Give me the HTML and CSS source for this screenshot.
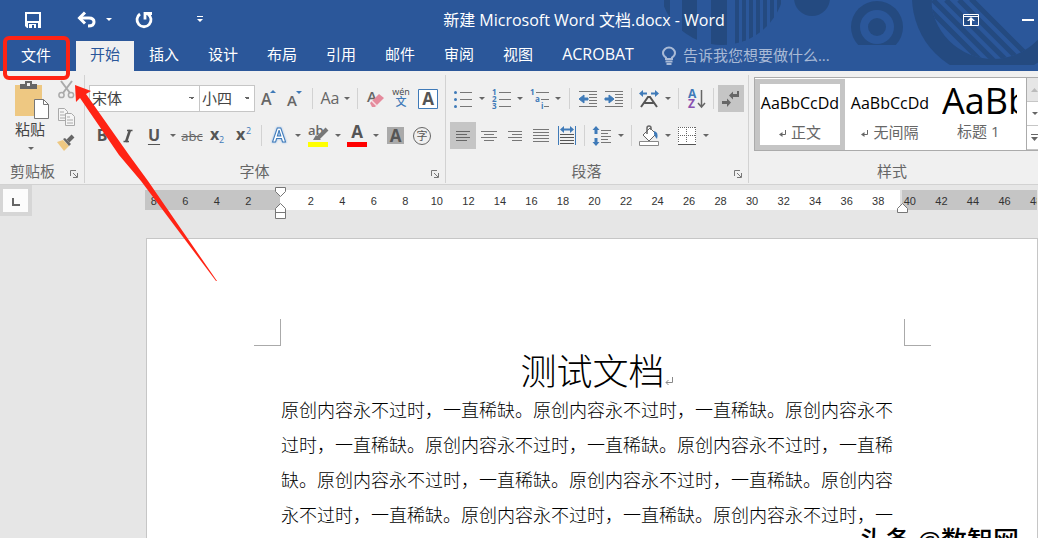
FILE: index.html
```html
<!DOCTYPE html>
<html lang="zh-CN">
<head>
<meta charset="utf-8">
<title>新建 Microsoft Word 文档.docx - Word</title>
<link rel="stylesheet" href="styles.css">
</head>
<body>
<header class="app-header">
  <svg class="header-art" width="380" height="71" viewBox="658 0 380 71" aria-hidden="true">
    <defs>
      <clipPath id="disc"><circle cx="722" cy="-18" r="63"/></clipPath>
      <clipPath id="ringcut"><rect x="845" y="0" width="65" height="45"/></clipPath>
      <clipPath id="bigcut"><rect x="905" y="0" width="133" height="65"/></clipPath>
      <clipPath id="hole"><circle cx="993" cy="-3" r="62"/></clipPath>
    </defs>
    <g fill="#244a80">
      <g clip-path="url(#disc)">
        <path d="M664 0h6v30h-6zM682 0h15v45h-15zM711 0h16v45h-16zM735 0h4v45h-4zM742 0h4v45h-4zM749 0h4v45h-4zM756 0h4v45h-4zM763 0h4v45h-4zM770 0h4v45h-4zM777 0h4v45h-4z"/>
      </g>
      <circle cx="812" cy="-2" r="18"/>
      <g clip-path="url(#ringcut)"><circle cx="877" cy="27" r="26"/><circle cx="877" cy="27" r="17" fill="#2b579a"/><circle cx="877" cy="27" r="9"/></g>
      <g clip-path="url(#bigcut)">
        <circle cx="992" cy="-3" r="80"/>
        <circle cx="993" cy="-3" r="62" fill="#2b579a"/>
        <g clip-path="url(#hole)" stroke="#244a80" stroke-width="5"><path d="M920 0l70 70M933 0l70 70M946 0l70 70M959 0l70 70M971 -1l60 60"/><path d="M925 0h7v20h-7z" stroke="none"/></g>
      </g>
    </g>
  </svg>
  <div class="title-row">
    <div class="quick-access">
      <button class="qa save" aria-label="保存"><svg width="16" height="16" viewBox="0 0 16 16"><path d="M0 0h16v16H2L0 14z" fill="#fff"/><path d="M2 2h12v7H2zM3 11h10v5H3z" fill="#2b579a"/><path d="M4 12h7v4H9v-3H7v3H4z" fill="#fff"/></svg></button>
      <button class="qa undo" aria-label="撤消"><svg width="20" height="16" viewBox="0 0 20 16" fill="none" stroke="#fff" stroke-width="3"><path d="M2 6h10q5 0 5 4t-6 4"/><path d="M8 .5L2.500 6 8 11.500"/></svg></button>
      <button class="qa undo-menu" aria-label="撤消选项"><svg width="6" height="3"><path d="M0 0h6L3 3z" fill="#fff"/></svg></button>
      <button class="qa redo" aria-label="重复"><svg width="18" height="18" viewBox="0 0 18 18" fill="none" stroke="#fff"><path d="M5 3a7 7 0 1 0 8 0" stroke-width="2.800"/><path d="M10 8.500V2.500H17" stroke-width="2.800"/></svg></button>
      <button class="qa customize" aria-label="自定义快速访问工具栏"><svg width="6" height="7"><path d="M0 0h6v1H0zM0 3h6L3 6z" fill="#fff"/></svg></button>
    </div>
    <h1 class="window-title">新建 Microsoft Word 文档.docx - Word</h1>
    <div class="window-controls">
      <button aria-label="功能区显示选项"><svg width="16" height="12" viewBox="0 0 16 12"><path d="M.5.5h15v11H.5zM1 2.500h14" fill="none" stroke="#fff"/><path d="M8 3l4 4h-2L9 6v5H7V6L6 7H4z" fill="#fff"/></svg></button>
      <button aria-label="最小化"><svg width="12" height="2"><path d="M0 0h12v2H0z" fill="#fff"/></svg></button>
    </div>
  </div>
  <nav class="tabs">
    <button class="tab file">文件</button>
    <button class="tab active">开始</button>
    <button class="tab">插入</button>
    <button class="tab">设计</button>
    <button class="tab">布局</button>
    <button class="tab">引用</button>
    <button class="tab">邮件</button>
    <button class="tab">审阅</button>
    <button class="tab">视图</button>
    <button class="tab latin">ACROBAT</button>
    <label class="tell-me"><svg width="14" height="18" viewBox="0 0 14 18" fill="none" stroke="#a9bad6" stroke-width="2"><path d="M4 12V10.500Q1 8.500 1 6a5.500 5 0 0 1 12 0q0 2.500-3 4.500V12z"/><path d="M3.500 14.500h7M4.500 17h5"/></svg><input type="text" aria-label="告诉我您想要做什么" placeholder="告诉我您想要做什么..."></label>
  </nav>
  <svg class="callout" width="220" height="250" viewBox="0 34 220 250" aria-hidden="true">
    <rect x="5" y="38" width="63" height="40" rx="4" fill="none" stroke="#ff2314" stroke-width="4"/>
    <path d="M75 85L91 91 86 94 129 155 148 181 217 281H216L141 181 119 155 80 98 76 102z" fill="#ff2314"/>
  </svg>
</header>

<section class="ribbon" aria-label="功能区">
  <div class="group clipboard">
    <div class="clip-body">
      <button class="paste"><svg width="35" height="38" viewBox="0 0 35 38"><path d="M0 4h27v31H0z" fill="#eec882"/><path d="M5 3h5V0h7v3h5v5H5z" fill="#666"/><path d="M12 2h3v3h-3z" fill="#f0f0f0"/><path d="M19.500 18.500h9l5 5v14h-14z" fill="#fff" stroke="#777"/><path d="M28.500 18.500v5h5" fill="none" stroke="#777"/></svg><span>粘贴</span><svg class="caret" width="6" height="3"><path d="M0 0h6L3 3z"/></svg></button>
      <div class="clip-tools">
        <button aria-label="剪切"><svg width="17" height="18" viewBox="0 0 17 18" fill="none" stroke="#aaa" stroke-width="2"><path d="M3 0l9 12M14 0L5 12"/><circle cx="3.500" cy="14" r="2.600" stroke-width="1.500"/><circle cx="13" cy="14" r="2.600" stroke-width="1.500"/></svg></button>
        <button aria-label="复制"><svg width="17" height="18" viewBox="0 0 17 18" fill="#f5f5f5" stroke="#aaa"><path d="M.5.5h6l3 3v9h-9z"/><path d="M2 4h4M2 7h5M2 10h5"/><path d="M7.500 5.500h6l3 3v9h-9z"/><path d="M9 9h3M9 12h6M9 15h6"/></svg></button>
        <button aria-label="格式刷"><svg width="18" height="16" viewBox="0 0 18 16"><path d="M0 7l6-2 6 6-5 5z" fill="#eec882"/><path d="M6 4l2-1 6 6-2 2z" fill="#666"/><path d="M11 6l5-5" stroke="#666" stroke-width="4"/></svg></button>
      </div>
    </div>
    <div class="group-label"><span>剪贴板</span><button class="launcher" aria-label="剪贴板设置"><svg width="8" height="8" viewBox="0 0 8 8" fill="none" stroke="#777"><path d="M.5 6V.5H6M3 3l4 4M7.500 3v4.500H3"/></svg></button></div>
  </div>

  <div class="group font">
    <div class="tool-row">
      <select class="font-name" aria-label="字体"><option>宋体</option></select>
      <select class="font-size" aria-label="字号"><option>小四</option></select>
      <button class="tool" aria-label="增大字号"><svg width="16" height="20" viewBox="0 0 16 20"><text x="0" y="16" font-size="16" class="glyph">A</text><path d="M9 4h6l-3-3z" fill="#3f7ab8"/></svg></button>
      <button class="tool" aria-label="减小字号"><svg width="16" height="20" viewBox="0 0 16 20"><text x="0" y="17" font-size="15" class="glyph">A</text><path d="M9 2h6l-3 3z" fill="#3f7ab8"/></svg></button>
      <i class="sep"></i>
      <button class="tool case" aria-label="更改大小写"><span class="glyph-text">Aa</span><svg class="caret" width="6" height="3"><path d="M0 0h6L3 3z"/></svg></button>
      <i class="sep"></i>
      <button class="tool" aria-label="清除所有格式"><svg width="17" height="20" viewBox="0 0 17 20"><text x="0" y="13" font-size="15" class="glyph">A</text><path d="M3 14l9-9 5 4-9 9H5z" fill="#e58a9c"/><path d="M5 12l5 5" stroke="#f7dbe0" stroke-width="1.500"/></svg></button>
      <button class="tool" aria-label="拼音指南"><svg width="18" height="22" viewBox="0 0 18 22"><text x="9" y="7" font-size="9" text-anchor="middle" class="pinyin">wén</text><text x="9" y="18" font-size="11" text-anchor="middle" class="zi-blue">文</text></svg></button>
      <button class="tool wide" aria-label="字符边框"><svg width="20" height="20" viewBox="0 0 20 20"><path d="M.5.5h19v19H.5z" fill="#fff" stroke="#3f7ab8"/><text x="10" y="16" font-size="17" text-anchor="middle" class="glyph bold">A</text></svg></button>
    </div>
    <div class="tool-row">
      <button class="tool" aria-label="加粗"><b class="glyph-text">B</b></button>
      <button class="tool" aria-label="倾斜"><svg width="10" height="14" viewBox="0 0 10 14" fill="none" stroke="#555"><path d="M4 1.500h5.500M.5 12.500H6" stroke-width="1.500"/><path d="M7 1L3 13" stroke-width="2.500"/></svg></button>
      <button class="tool" aria-label="下划线"><b class="glyph-text underline">U</b></button>
      <button class="drop" aria-label="下划线选项"><svg class="caret" width="6" height="3"><path d="M0 0h6L3 3z"/></svg></button>
      <button class="tool" aria-label="删除线"><s class="strike">abc</s></button>
      <button class="tool" aria-label="下标"><svg width="16" height="20" viewBox="0 0 16 20"><text x="0" y="14" font-size="16" class="glyph bold">x</text><text x="9" y="17" font-size="9" class="blue">2</text></svg></button>
      <button class="tool" aria-label="上标"><svg width="16" height="20" viewBox="0 0 16 20"><text x="0" y="14" font-size="16" class="glyph bold">x</text><text x="10" y="8" font-size="9" class="blue">2</text></svg></button>
      <i class="sep"></i>
      <button class="tool" aria-label="文本效果"><svg width="20" height="20" viewBox="0 0 20 20"><text x="10" y="16" font-size="19" text-anchor="middle" class="effect">A</text></svg></button>
      <button class="drop" aria-label="文本效果选项"><svg class="caret" width="6" height="3"><path d="M0 0h6L3 3z"/></svg></button>
      <button class="tool wide" aria-label="突出显示"><svg width="20" height="22" viewBox="0 0 20 22"><text x="0" y="10" font-size="13" class="glyph">ab</text><path d="M19 4l-9 9" stroke="#777" stroke-width="4"/><path d="M5 15l3-5 5 5z" fill="#777"/><path d="M0 17h20v5H0z" fill="#ff0"/></svg></button>
      <button class="drop" aria-label="突出显示颜色"><svg class="caret" width="6" height="3"><path d="M0 0h6L3 3z"/></svg></button>
      <button class="tool" aria-label="字体颜色"><svg width="20" height="22" viewBox="0 0 20 22"><text x="10" y="13" font-size="17" text-anchor="middle" class="glyph bold">A</text><path d="M0 17h20v5H0z" fill="red"/></svg></button>
      <button class="drop" aria-label="字体颜色选项"><svg class="caret" width="6" height="3"><path d="M0 0h6L3 3z"/></svg></button>
      <button class="tool" aria-label="字符底纹"><svg width="17" height="17" viewBox="0 0 17 17"><path d="M0 0h17v17H0z" fill="#aaa"/><text x="8.500" y="15" font-size="17" text-anchor="middle" class="glyph bold">A</text></svg></button>
      <button class="tool wide" aria-label="带圈字符"><svg width="18" height="18" viewBox="0 0 18 18"><circle cx="9" cy="9" r="8.500" fill="none" stroke="#666"/><text x="9" y="13" font-size="11" text-anchor="middle" class="zi">字</text></svg></button>
    </div>
    <div class="group-label"><span>字体</span><button class="launcher" aria-label="字体设置"><svg width="8" height="8" viewBox="0 0 8 8" fill="none" stroke="#777"><path d="M.5 6V.5H6M3 3l4 4M7.500 3v4.500H3"/></svg></button></div>
  </div>

  <div class="group paragraph">
    <div class="tool-row">
      <button class="tool" aria-label="项目符号"><svg width="18" height="18" viewBox="0 0 18 18"><path d="M6 2.500h12M6 9.500h12M6 16.500h12" stroke="#777"/><g fill="#3f7ab8"><circle cx="1.500" cy="2.500" r="1.500"/><circle cx="1.500" cy="9.500" r="1.500"/><circle cx="1.500" cy="16.500" r="1.500"/></g></svg></button>
      <button class="drop" aria-label="项目符号选项"><svg class="caret" width="6" height="3"><path d="M0 0h6L3 3z"/></svg></button>
      <button class="tool" aria-label="编号"><svg width="19" height="20" viewBox="0 0 19 20"><path d="M7 3.500h12M7 10.500h12M7 17.500h12" stroke="#777"/><g class="mini"><text x="0" y="6">1</text><text x="0" y="13">2</text><text x="0" y="20">3</text></g></svg></button>
      <button class="drop" aria-label="编号选项"><svg class="caret" width="6" height="3"><path d="M0 0h6L3 3z"/></svg></button>
      <button class="tool" aria-label="多级列表"><svg width="19" height="20" viewBox="0 0 19 20"><path d="M6 3.500h13M11 10.500h8M14 17.500h5" stroke="#777"/><g class="mini"><text x="0" y="6">1</text><text x="5" y="13">a</text><text x="11" y="20">i</text></g></svg></button>
      <button class="drop" aria-label="多级列表选项"><svg class="caret" width="6" height="3"><path d="M0 0h6L3 3z"/></svg></button>
      <i class="sep roomy"></i>
      <button class="tool" aria-label="减少缩进量"><svg width="18" height="18" viewBox="0 0 18 18"><path d="M0 1.500h18M10 4.500h8M10 7.500h8M10 10.500h8M10 13.500h8M0 16.500h18" stroke="#777"/><path d="M0 9l5-4v3h4v2H5v3z" fill="#3f7ab8" stroke="#3f7ab8"/></svg></button>
      <button class="tool" aria-label="增加缩进量"><svg width="18" height="18" viewBox="0 0 18 18"><path d="M0 1.500h18M10 4.500h8M10 7.500h8M10 10.500h8M10 13.500h8M0 16.500h18" stroke="#777"/><path d="M9 9L4 5v3H0v2h4v3z" fill="#3f7ab8" stroke="#3f7ab8"/></svg></button>
      <i class="sep"></i>
      <button class="tool" aria-label="中文版式"><svg width="20" height="18" viewBox="0 0 20 18"><path d="M2 17L9 7h2l7 10M5.500 13h9" fill="none" stroke="#555" stroke-width="2"/><path d="M0 3.500L4 0v2.500h4v2H4V7zM20 3.500L16 0v2.500h-4v2h4V7z" fill="#3f7ab8"/></svg></button>
      <button class="drop" aria-label="中文版式选项"><svg class="caret" width="6" height="3"><path d="M0 0h6L3 3z"/></svg></button>
      <i class="sep"></i>
      <button class="tool" aria-label="排序"><svg width="17" height="20" viewBox="0 0 17 20"><text x="0" y="9" font-size="12" class="blue bold">A</text><text x="0" y="19" font-size="12" class="purple bold">Z</text><path d="M13.500 1v17M10 14l3.500 4 3.500-4" fill="none" stroke="#666" stroke-width="1.500"/></svg></button>
      <i class="sep"></i>
      <button class="tool pressed" aria-label="显示编辑标记" aria-pressed="true"><svg width="18" height="16" viewBox="0 0 18 16"><path d="M7 4.500l4-4V3h4V0h2v6h-6v2.500zM9 11.500L5 7.500V10H0v3h5v3z" fill="#666"/></svg></button>
    </div>
    <div class="tool-row">
      <button class="tool pressed" aria-label="左对齐" aria-pressed="true"><svg width="14" height="12" viewBox="0 0 14 12"><path d="M0 1.500h14M0 4.500h11M0 7.500h14M0 10.500h11" stroke="#666"/></svg></button>
      <button class="tool" aria-label="居中"><svg width="16" height="12" viewBox="0 0 16 12"><path d="M0 1.500h16M3 4.500h10M0 7.500h16M3 10.500h10" stroke="#777"/></svg></button>
      <button class="tool" aria-label="右对齐"><svg width="14" height="12" viewBox="0 0 14 12"><path d="M0 1.500h14M4 4.500h10M0 7.500h14M4 10.500h10" stroke="#777"/></svg></button>
      <button class="tool" aria-label="两端对齐"><svg width="16" height="14" viewBox="0 0 16 14"><path d="M0 .5h16M0 3.500h16M0 6.500h16M0 9.500h16M0 12.500h16" stroke="#777"/></svg></button>
      <button class="tool" aria-label="分散对齐"><svg width="18" height="19" viewBox="0 0 18 19"><path d="M.5 0v19M17.500 0v19" stroke="#3f7ab8"/><path d="M2 8.500h14M2 11.500h14M2 14.500h14M2 17.500h14" stroke="#555"/><path d="M2 3.500L6 0v2.500h6V0l4 3.500L12 7V4.500H6V7z" fill="#3f7ab8"/></svg></button>
      <i class="sep"></i>
      <button class="tool" aria-label="行距"><svg width="18" height="20" viewBox="0 0 18 20"><path d="M8 4.500h10M8 7.500h7M8 10.500h10M8 13.500h7M8 16.500h10" stroke="#777"/><path d="M3 0l3.500 4h-2v4h-3V4h-2zM3 20l3.500-4h-2v-4h-3v4h-2z" fill="#3f7ab8"/></svg></button>
      <button class="drop" aria-label="行距选项"><svg class="caret" width="6" height="3"><path d="M0 0h6L3 3z"/></svg></button>
      <i class="sep"></i>
      <button class="tool" aria-label="底纹"><svg width="20" height="20" viewBox="0 0 20 20"><path d="M4 9l7-7 6 6-7 7z" fill="#fff" stroke="#666"/><path d="M8 8V2q0-2 2-2t2 2v2" fill="none" stroke="#666" stroke-width="1.500"/><path d="M15 5q5 1 3 8-2-2-3-5z" fill="#3f7ab8"/><path d="M.5 15.500h19v4H.5z" fill="#fff" stroke="#888"/></svg></button>
      <button class="drop" aria-label="底纹选项"><svg class="caret" width="6" height="3"><path d="M0 0h6L3 3z"/></svg></button>
      <button class="tool" aria-label="边框"><svg width="18" height="18" viewBox="0 0 18 18"><path d="M0 0h18v17H0z" fill="#fff"/><path d="M0 .5h18M.5 0v16M17.500 0v16M8.500 0v16M0 8.500h18" fill="none" stroke="#666" stroke-dasharray="1 1"/><path d="M0 17.500h18" stroke="#555"/></svg></button>
      <button class="drop" aria-label="边框选项"><svg class="caret" width="6" height="3"><path d="M0 0h6L3 3z"/></svg></button>
    </div>
    <div class="group-label"><span>段落</span><button class="launcher" aria-label="段落设置"><svg width="8" height="8" viewBox="0 0 8 8" fill="none" stroke="#777"><path d="M.5 6V.5H6M3 3l4 4M7.500 3v4.500H3"/></svg></button></div>
  </div>

  <div class="group styles">
    <div class="gallery">
      <button class="style selected"><span class="sample">AaBbCcDd</span><span class="style-name"><svg class="mark" width="7" height="7" viewBox="0 0 7 7"><path d="M3.500 2v5L0 4.500z" fill="#666"/><path d="M6.500 0v4.500H2" fill="none" stroke="#666"/></svg>正文</span></button>
      <button class="style"><span class="sample">AaBbCcDd</span><span class="style-name"><svg class="mark" width="7" height="7" viewBox="0 0 7 7"><path d="M3.500 2v5L0 4.500z" fill="#666"/><path d="M6.500 0v4.500H2" fill="none" stroke="#666"/></svg>无间隔</span></button>
      <button class="style heading"><span class="sample">AaBb</span><span class="style-name">标题 1</span></button>
      <div class="gallery-nav">
        <button class="dim" aria-label="上一行"><svg width="7" height="4"><path d="M0 4h7L3.500 0z" fill="#bbb"/></svg></button>
        <button aria-label="下一行"><svg class="caret" width="6" height="3"><path d="M0 0h6L3 3z"/></svg></button>
        <button aria-label="其他"><svg class="caret" width="7" height="7"><path d="M0 0h7v1H0zM0 3h7L3.500 7z"/></svg></button>
      </div>
    </div>
    <div class="group-label"><span>样式</span></div>
  </div>
</section>

<main class="workspace">
  <div class="ruler-row">
    <button class="tab-stop" aria-label="制表符"><svg width="8" height="8"><path d="M1 0v7h7" fill="none" stroke="#666" stroke-width="2"/></svg></button>
    <div class="ruler">
      <div class="seg left"><div class="ticks four"><span>8</span><span>6</span><span>4</span><span>2</span></div></div>
      <div class="seg middle"><div class="ticks nineteen"><span>2</span><span>4</span><span>6</span><span>8</span><span>10</span><span>12</span><span>14</span><span>16</span><span>18</span><span>20</span><span>22</span><span>24</span><span>26</span><span>28</span><span>30</span><span>32</span><span>34</span><span>36</span><span>38</span></div>
        <svg class="indent start" width="12" height="32" viewBox="0 0 12 32" fill="#fff" stroke="#777"><path d="M.5.5h10v4l-5 5-5-5zM.5 31.500v-10l5-5 5 5v10zM.5 25.500h10"/></svg>
        <svg class="indent end" width="12" height="11" viewBox="0 0 12 11" fill="#fff" stroke="#777"><path d="M.5 9.500v-4l5-5 5 5v4z"/></svg>
      </div>
      <div class="seg right"><div class="ticks five"><span>40</span><span>42</span><span>44</span><span>46</span><span>48</span></div></div>
    </div>
  </div>
  <article class="page">
    <div class="crop-marks"><i class="crop tl"></i><i class="crop tr"></i></div>
    <div class="content">
      <h2>测试文档<span class="return"><svg width="8" height="8" viewBox="0 0 8 8" fill="none" stroke="#888"><path d="M7.500 0v5.500H1M3.500 3L1 5.500 3.500 8"/></svg></span></h2>
      <p>原创内容永不过时，一直稀缺。原创内容永不过时，一直稀缺。原创内容永不过时，一直稀缺。原创内容永不过时，一直稀缺。原创内容永不过时，一直稀缺。原创内容永不过时，一直稀缺。原创内容永不过时，一直稀缺。原创内容永不过时，一直稀缺。原创内容永不过时，一直稀缺。原创内容永不过时，一</p>
    </div>
  </article>
</main>
<div class="watermark">头条 @数智网</div>
</body>
</html>
```
FILE: styles.css
```css
* { box-sizing: border-box; }

body {
  margin: 0;
  height: 100vh;
  overflow: hidden;
  position: relative;
  display: flex;
  flex-direction: column;
  background: #e6e6e6;
  color: #444;
  font: 15px/20px "Open Sans", "Noto Sans CJK SC", sans-serif;
}

button, select, input { font: inherit; color: inherit; }
button {
  display: inline-flex;
  align-items: center;
  justify-content: center;
  flex: none;
  margin: 0;
  padding: 0;
  border: 0;
  background: none;
}
svg { display: block; flex: none; overflow: visible; }
.caret { fill: #666; }

/* Title bar and tabs */
.app-header { position: relative; flex: none; background: #2b579a; color: #fff; }
.header-art { position: absolute; top: 0; right: 0; }
.callout { position: absolute; left: 0; top: 34px; z-index: 5; pointer-events: none; }
.title-row { position: relative; display: flex; align-items: center; height: 41px; padding-bottom: 2px; }
.quick-access { display: flex; align-items: center; width: 220px; padding-left: 25px; }
.save { margin-right: 36px; }
.undo { margin-right: 9px; }
.undo-menu { margin-right: 23px; }
.redo { margin-right: 44px; }
.window-title { flex: 1; margin: 0; text-align: center; font-size: 16px; font-weight: 400; white-space: nowrap; }
.window-controls { display: flex; align-items: center; gap: 43px; width: 90px; padding-left: 15px; }
.tabs { position: relative; display: flex; gap: 1px; height: 30px; }
.tab { padding: 0 14px 4px; }
.tab.file { width: 72px; margin-right: 3px; padding-bottom: 2px; }
.tab.active { background: #f0f0f0; color: #2b579a; }
.tab.latin { font-size: 16px; }
.tell-me { display: flex; align-items: center; gap: 7px; flex: 1; padding-left: 13px; }
.tell-me input { width: 180px; padding: 0 0 2px; border: 0; outline: 0; background: none; color: #fff; }
.tell-me input::placeholder { color: #a9bad6; opacity: 1; }

/* Ribbon */
.ribbon {
  display: grid;
  grid-template-columns: 85px 361px 303px 1fr;
  flex: none;
  height: 114px;
  padding: 4px 0;
  background: #f0f0f0;
  border-bottom: 1px solid #d2d2d2;
}
.group {
  position: relative;
  display: flex;
  flex-direction: column;
  gap: 10px;
  min-width: 0;
  padding: 10px 3px 2px 4px;
  border-right: 1px solid #d2d2d2;
}
.group-label {
  display: flex;
  align-items: flex-end;
  justify-content: center;
  height: 20px;
  margin-top: auto;
  color: #666;
}
.group-label span { flex: 1; padding-right: 8px; text-align: center; }
.launcher { width: 14px; height: 14px; }

.group.clipboard { padding: 4px 3px 2px 10px; }
.clip-body { display: flex; justify-content: space-between; padding: 0 6px 0 5px; }
.paste { flex-direction: column; align-items: flex-start; color: #444; }
.paste span { line-height: 20px; }
.paste .caret { margin: 8px 0 0 13px; }
.clip-tools { display: flex; flex-direction: column; gap: 9px; padding-top: 2px; }
.clipboard .group-label span { padding: 0; text-align: left; }

.tool-row { display: flex; height: 27px; }
.tool { width: 26px; height: 27px; }
.tool.wide { width: 28px; }
.tool.case { width: 36px; gap: 4px; }
.tool.pressed { background: #c5c5c5; }
.drop { width: 12px; height: 27px; }
.sep { flex: none; width: 1px; height: 21px; margin: 3px 4px; background: #d2d2d2; }
.sep.roomy { margin: 3px 5px; }

select {
  height: 27px;
  margin: 0;
  padding: 0 2px 2px;
  border: 1px solid #c6c6c6;
  border-radius: 0;
  appearance: none;
  background-color: #fff;
  background-image: linear-gradient(to bottom right, #666 50%, transparent 50%), linear-gradient(to bottom left, #666 50%, transparent 50%);
  background-position: right 4px center, right 7px center;
  background-size: 3px 3px;
  background-repeat: no-repeat;
}
.font-name { width: 111px; }
.font-size { width: 56px; margin: 0 1px 0 -1px; }

.glyph-text { padding-bottom: 2px; color: #666; font-size: 16px; }
b.glyph-text { color: #555; }
.underline { text-decoration: underline; text-underline-offset: 3px; }
.strike { color: #666; font-size: 13px; }
.glyph { fill: #666; font-family: "Open Sans", sans-serif; font-weight: 600; }
.glyph.bold { fill: #555; font-weight: 700; }
.bold { font-weight: 700; }
.pinyin { fill: #444; font-family: "Open Sans", sans-serif; }
.zi { fill: #555; }
.zi-blue { fill: #3f7ab8; font-weight: 500; }
.blue { fill: #3f7ab8; }
.purple { fill: #8a52b0; }
.effect { fill: #fff; stroke: #3f7ab8; stroke-width: 1px; font-weight: 700; filter: drop-shadow(0 0 1px #8db8ea); }
.mini { fill: #3f7ab8; font-size: 8px; font-weight: 700; }

/* Style gallery */
.group.styles { padding: 2px 0 2px 5px; border-right: 0; overflow: hidden; }
.gallery { display: flex; height: 75px; background: #fff; border: 1px solid #ababab; border-right: 0; }
.style {
  flex-direction: column;
  width: 90px;
  height: 71px;
  margin-top: 1px;
  padding-top: 4px;
  border: 5px solid transparent;
}
.style.selected { border-color: #c5c5c5; }
.sample { height: 30px; color: #000; font-size: 16px; line-height: 30px; }
.style-name { display: flex; align-items: center; gap: 5px; height: 28px; color: #666; }
.mark { margin-top: 4px; }
.style.heading { flex: 1; width: auto; align-items: flex-start; padding-left: 2px; }
.heading .sample { width: 75px; overflow: hidden; font-size: 36px; line-height: 26px; }
.heading .style-name { padding-left: 15px; }
.gallery-nav { display: grid; grid-template-rows: repeat(3, 1fr); width: 12px; border-left: 1px solid #ababab; }
.gallery-nav button { padding-left: 4px; border-bottom: 1px solid #c6c6c6; }
.gallery-nav .dim { background: #e6e6e6; }

/* Ruler */
.workspace { display: flex; flex-direction: column; flex: 1; min-height: 0; }
.ruler-row { display: flex; align-items: flex-start; flex: none; height: 53px; }
.tab-stop { width: 32px; height: 31px; padding: 3px 0 0 1px; background: #fcfcfc; border: 4px solid #d6d6d6; border-left-width: 3px; }
.ruler { display: flex; flex: 1; min-width: 0; height: 20px; margin: 5px 1px 0 113px; color: #333; font: 11px/22px "Liberation Sans", sans-serif; }
.seg { display: flex; height: 20px; }
.seg.left { justify-content: flex-end; width: 135px; padding-right: 16px; background: #c5c5c5; }
.seg.middle { position: relative; width: 622px; padding: 0 7px 0 15px; background: #fff; border-right: 2px solid #e0e0e0; }
.seg.right { flex: 1; min-width: 0; background: #c5c5c5; overflow: hidden; }
.ticks { display: grid; flex: none; text-align: center; }
.ticks.four { grid-template-columns: repeat(4, 1fr); width: 126px; }
.ticks.nineteen { grid-template-columns: repeat(19, 1fr); width: 599px; }
.ticks.five { grid-template-columns: repeat(5, 1fr); width: 158px; margin-left: -8px; }
.indent { position: absolute; }
.indent.start { left: -5px; top: -3px; }
.indent.end { right: -9px; top: 13px; }

/* Page */
.page {
  flex: 1;
  min-height: 0;
  margin-left: 146px;
  padding: 80px 106px 0 107px;
  overflow: hidden;
  background: #fff;
  border: 1px solid #c6c6c6;
  border-bottom: 0;
}
.crop-marks { display: flex; justify-content: space-between; height: 27px; }
.crop { width: 27px; height: 27px; border-bottom: 1px solid #aaa; }
.crop.tl { border-right: 1px solid #aaa; }
.crop.tr { border-left: 1px solid #aaa; }
.content { padding: 0 27px; color: #000; font-family: "Noto Sans CJK SC", sans-serif; font-weight: 300; }
.content h2 { margin: 0; font-size: 36px; font-weight: 300; line-height: 46px; text-align: center; }
.content p { margin: 0; font-size: 18px; line-height: 35px; text-spacing-trim: space-all; }
.return { display: inline-block; width: 0; }

.watermark {
  position: absolute;
  right: 19px;
  top: 522px;
  color: #000;
  font-size: 26px;
  font-weight: 500;
  line-height: 36px;
  white-space: nowrap;
  text-shadow: 1px 1px #fff, -1px -1px #fff;
}
```
